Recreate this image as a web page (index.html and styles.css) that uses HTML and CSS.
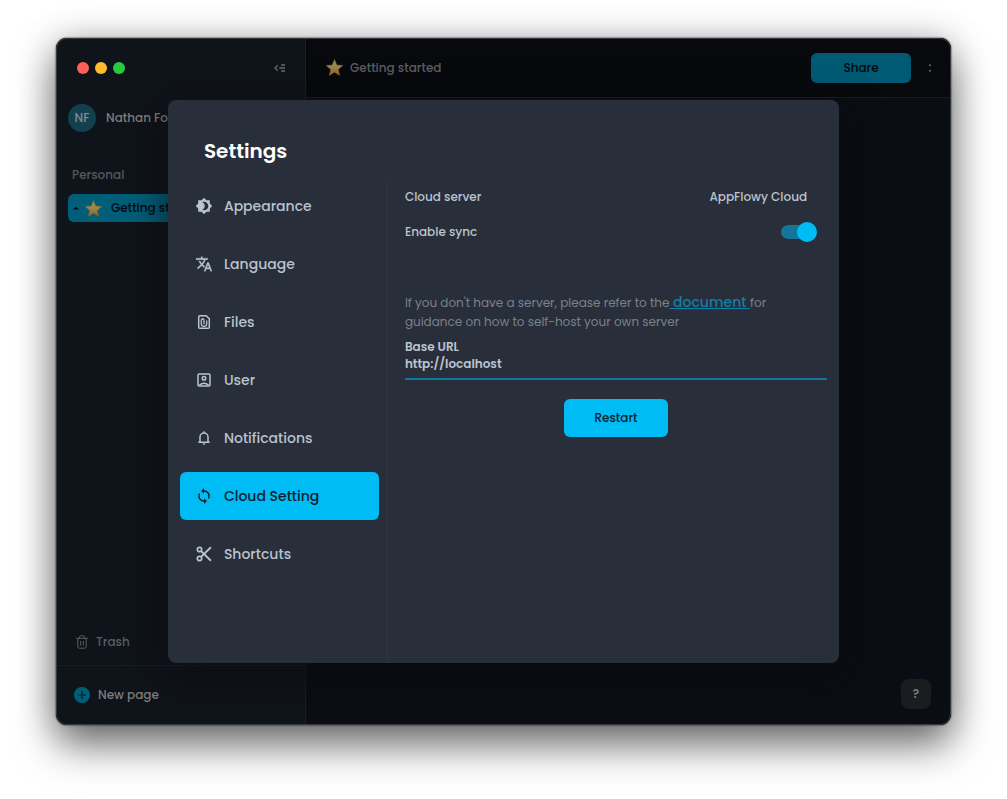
FILE: index.html
```html
<!DOCTYPE html>
<html lang="en">
<head>
<meta charset="utf-8">
<meta name="viewport" content="width=device-width, initial-scale=1">
<title>AppFlowy</title>
<link rel="stylesheet" href="styles.css">
</head>
<body>
<svg class="defs" width="0" height="0" aria-hidden="true">
  <defs>
    <linearGradient id="gold" x1="0" y1="0" x2="0" y2="1">
      <stop offset="0" stop-color="#96916e"/>
      <stop offset=".5" stop-color="#9b8550"/>
      <stop offset="1" stop-color="#946012"/>
    </linearGradient>
    <symbol id="star" viewBox="0 0 24 24">
      <path fill="url(#gold)" stroke="#8a6119" stroke-width=".7" stroke-linejoin="round" d="M12 1.8l2.9 7.1 7.7.5-5.9 5 1.9 7.6L12 17.9 5.4 22l1.9-7.6-5.9-5 7.7-.5z"/>
    </symbol>
  </defs>
</svg>
<div class="window">
  <aside class="sidebar">
    <div class="titlebar">
      <div class="lights"><span class="light red"></span><span class="light yellow"></span><span class="light green"></span></div>
      <button class="icon-button" aria-label="Collapse sidebar">
        <svg width="12" height="10" viewBox="0 0 12 10" fill="none" stroke="currentColor" stroke-width="1.3"><path d="M3.8 2.1L1 5l2.800 2.900M7.200 2H11M5.200 5H11M7.200 8H11"/></svg>
      </button>
    </div>
    <div class="account"><span class="avatar">NF</span><span>Nathan Foo</span></div>
    <h2 class="section">Personal</h2>
    <a class="page-link" href="#">
      <svg class="caret" width="6" height="4" viewBox="0 0 6 4"><path d="M0 3.5L3 .7l3 2.8z" fill="currentColor"/></svg>
      <svg width="19" height="19"><use href="#star"/></svg>
      <span>Getting started</span>
    </a>
    <button class="trash">
      <svg width="12" height="14" viewBox="0 0 12 14" fill="none" stroke="currentColor" stroke-width="1" stroke-linecap="round" stroke-linejoin="round"><path d="M.7 3.3h10.6M3.6 3V1.8Q3.6.8 4.6.8h2.8q1 0 1 1V3M1.8 3.5v8.1q0 1.6 1.6 1.6h5.2q1.6 0 1.6-1.6V3.5M4.7 6.4v3.8M7.3 6.4v3.8"/></svg>
      <span>Trash</span>
    </button>
    <button class="new-page">
      <svg width="16" height="16" viewBox="0 0 16 16"><circle cx="8" cy="8" r="8" fill="#005f78"/><path d="M8 4.2v7.6M4.2 8h7.6" stroke="#0a1c27" stroke-width="1.2" stroke-linecap="round"/></svg>
      <span>New page</span>
    </button>
  </aside>
  <main class="content">
    <header class="topbar">
      <svg width="19" height="19"><use href="#star"/></svg>
      <h1 class="page-title">Getting started</h1>
      <button class="share">Share</button>
      <button class="icon-button more" aria-label="More">
        <svg width="4" height="8" viewBox="0 0 4 8" fill="currentColor"><circle cx="2" cy="1.2" r="1"/><circle cx="2" cy="6.8" r="1"/></svg>
      </button>
    </header>
    <div class="canvas"><button class="help" aria-label="Help">?</button></div>
  </main>

  <div class="overlay">
    <section class="dialog" role="dialog" aria-labelledby="settings-title">
      <h2 class="dialog-title" id="settings-title">Settings</h2>
      <div class="dialog-body">
        <nav class="menu">
          <button class="menu-item">
            <svg width="16" height="16" viewBox="1 1 22 22" fill="currentColor"><path fill-rule="evenodd" d="M20 8.69V4h-4.690L12 .69 8.690 4H4v4.690L.69 12 4 15.310V20h4.690L12 23.310 15.310 20H20v-4.690L23.310 12zM12 18c-.9 0-1.700-.2-2.500-.55C11.560 16.500 13 14.400 13 12S11.560 7.500 9.500 6.550C10.300 6.200 11.100 6 12 6c3.310 0 6 2.690 6 6s-2.690 6-6 6z"/></svg>
            <span>Appearance</span>
          </button>
          <button class="menu-item">
            <svg width="16" height="16" viewBox="1 1 22 22" fill="currentColor" stroke="currentColor" stroke-width=".4"><path d="M12.870 15.070l-2.540-2.510.03-.03A17.520 17.520 0 0 0 14.070 6H17V4h-7V2H8v2H1v2h11.170C11.500 7.920 10.440 9.750 9 11.350 8.070 10.320 7.300 9.190 6.690 8h-2c.73 1.630 1.730 3.170 2.980 4.560l-5.090 5.020L4 19l5-5 3.110 3.110zM18.500 10h-2L12 22h2l1.120-3h4.750L21 22h2zm-2.620 7l1.620-4.330L19.120 17z"/></svg>
            <span>Language</span>
          </button>
          <button class="menu-item">
            <svg width="16" height="16" viewBox="0 0 16 16" fill="none" stroke="currentColor" stroke-width="1.5" stroke-linejoin="round"><path d="M10.200 1.700H3.700q-1 0-1 1v10.600q0 1 1 1h8.600q1 0 1-1V4.800z"/><path stroke-width="1.300" d="M10.700 6.400v3.600a2.700 2.300 0 0 1-5.400 0V6.300q0-1.300 1.350-1.300T8 6.300v3.900"/></svg>
            <span>Files</span>
          </button>
          <button class="menu-item">
            <svg width="16" height="16" viewBox="0 0 16 16" fill="none" stroke="currentColor" stroke-width="1.500"><rect x="2" y="2" width="12" height="12" rx="1"/><circle cx="8" cy="6.300" r="1.800"/><path d="M3.300 13.200q4.700-4 9.400 0"/></svg>
            <span>User</span>
          </button>
          <button class="menu-item">
            <svg width="16" height="16" viewBox="0 0 16 16" fill="none" stroke="currentColor" stroke-width="1.500" stroke-linejoin="round"><path d="M2.300 12.200h11.400M4 12V7.100a4 4 0 0 1 8 0V12M8 3V1.300"/><path d="M6.500 13.600h3q-.3 1.300-1.500 1.300t-1.500-1.300z" fill="currentColor" stroke="none"/></svg>
            <span>Notifications</span>
          </button>
          <button class="menu-item active" aria-current="page">
            <svg width="16" height="16" viewBox="1 1 22 22" fill="currentColor"><path d="M12 4V1L8 5l4 4V6c3.310 0 6 2.690 6 6 0 1.010-.25 1.970-.7 2.800l1.460 1.460A7.930 7.930 0 0 0 20 12c0-4.420-3.580-8-8-8zm0 14c-3.310 0-6-2.690-6-6 0-1.010.25-1.970.7-2.800L5.240 7.740A7.930 7.930 0 0 0 4 12c0 4.420 3.580 8 8 8v3l4-4-4-4z"/></svg>
            <span>Cloud Setting</span>
          </button>
          <button class="menu-item">
            <svg width="16" height="16" viewBox="1 1 22 22" fill="none" stroke="currentColor" stroke-width="2.300"><circle cx="5.800" cy="5.800" r="3"/><circle cx="5.800" cy="18.200" r="3"/><path stroke-width="2.700" d="M8 8l13.500 13.200M8 16L21.500 2.800"/></svg>
            <span>Shortcuts</span>
          </button>
        </nav>
        <form class="panel">
          <div class="row"><span>Cloud server</span><button type="button" class="server">AppFlowy Cloud</button></div>
          <div class="row"><label for="sync">Enable sync</label><input class="switch" id="sync" type="checkbox" role="switch" checked></div>
          <p class="hint">If you don't have a server, please refer to the<a class="doc" href="#"> document </a>for guidance on how to self-host your own server</p>
          <label class="url-label" for="url">Base URL</label>
          <input class="url" id="url" type="text" value="http://localhost">
          <button type="button" class="restart">Restart</button>
        </form>
      </div>
    </section>
  </div>
</div>
</body>
</html>
```
FILE: styles.css
```css
* { box-sizing: border-box; }
body {
  margin: 0;
  min-height: 100vh;
  padding: 38px 56px 74px;
  display: flex;
  background: #fff;
  color: #bbc3cd;
  font: 500 12px/20px Poppins, Inter, sans-serif;
  overflow: hidden;
}
button, input { font: inherit; color: inherit; }
button {
  padding: 0;
  border: 0;
  background: none;
  display: flex;
  align-items: center;
}
h1, h2, p { margin: 0; font: inherit; }
svg { flex: none; }
.defs { position: absolute; }

.window {
  position: relative;
  flex: 1;
  display: grid;
  grid-template-columns: 250px 1fr;
  border-radius: 11px;
  background: #0a0d14;
  box-shadow: 0 0 2px #000, 0 20px 40px rgba(0, 0, 0, .55), 0 0 36px rgba(0, 0, 0, .2);
}
.window::after {
  content: "";
  position: absolute;
  inset: 0;
  border: 1px solid #38393c;
  border-radius: 11px;
  pointer-events: none;
}

.sidebar {
  display: flex;
  flex-direction: column;
  border-right: 1px solid #1a1d23;
  border-radius: 11px 0 0 11px;
  background: #0f131a;
  color: #7d7d7e;
}
.titlebar {
  height: 60px;
  padding: 0 19px 0 21px;
  display: flex;
  align-items: center;
  justify-content: space-between;
}
.lights { display: flex; gap: 6px; }
.light { width: 12px; height: 12px; border-radius: 50%; }
.red { background: #ff5f57; }
.yellow { background: #febc2e; }
.green { background: #28c840; }
.icon-button { color: #6b6d70; }
.account {
  height: 28px;
  margin: 6px 12px 0;
  display: flex;
  align-items: center;
  gap: 10px;
}
.avatar {
  width: 28px;
  height: 28px;
  border-radius: 50%;
  background: #12404f;
  color: #7f8c92;
  line-height: 28px;
  text-align: center;
}
.section { margin: 33px 16px 9px; color: #55585c; }
.page-link {
  height: 28px;
  margin: 0 12px;
  padding-left: 5px;
  display: flex;
  align-items: center;
  border-radius: 6px;
  background: #005e78;
  color: #05090d;
  text-decoration: none;
}
.caret { margin-right: 5px; }
.page-link span { margin-left: 8px; }
.trash { margin: auto 20px 13px; gap: 8px; color: #5b5e62; }
.new-page {
  height: 60px;
  padding: 0 18px 2px;
  gap: 8px;
  border-top: 1px solid #1a1e24;
}

.content { display: flex; flex-direction: column; }
.topbar {
  height: 60px;
  padding: 0 19px;
  display: flex;
  align-items: center;
  border-bottom: 1px solid #1a1d22;
  border-top-right-radius: 11px;
  background: #07090d;
  color: #5c5e61;
}
.page-title { margin-left: 6px; }
.share {
  width: 100px;
  height: 30px;
  margin-left: auto;
  justify-content: center;
  border-radius: 6px;
  background: #005a73;
  color: #04080c;
}
.more { margin-left: 17px; }
.canvas {
  flex: 1;
  padding: 0 20px 16px;
  display: flex;
  align-items: flex-end;
  justify-content: flex-end;
}
.help {
  width: 30px;
  height: 30px;
  justify-content: center;
  border-radius: 8px;
  background: #1a1c1f;
  color: #77797b;
  font-weight: 600;
}

.overlay {
  position: absolute;
  inset: 0;
  padding: 62px 12.5%;
  display: flex;
}
.dialog {
  flex: 1;
  padding-top: 36px;
  display: flex;
  flex-direction: column;
  border-radius: 8px;
  background: #282e3a;
  box-shadow: 0 10px 40px rgba(10, 10, 10, .7);
}
.dialog-title {
  padding: 0 36px;
  margin-bottom: 16px;
  color: #fff;
  font-size: 20px;
  font-weight: 600;
  line-height: 30px;
}
.dialog-body {
  flex: 1;
  display: grid;
  grid-template-columns: 220px 1fr;
}
.menu {
  padding: 0 8px 0 12px;
  display: flex;
  flex-direction: column;
  gap: 10px;
  border-right: 1px solid #303642;
}
.menu-item {
  height: 48px;
  padding: 0 16px;
  gap: 12px;
  border-radius: 6px;
  font-size: 14px;
}
.active { background: #00bcf4; color: #10202b; }
.panel {
  padding: 0 12px 0 17px;
  display: flex;
  flex-direction: column;
}
.row {
  height: 30px;
  display: flex;
  align-items: center;
  justify-content: space-between;
}
.row + .row { height: 40px; }
.server { padding-right: 20px; }
.switch {
  appearance: none;
  width: 36px;
  height: 20px;
  margin: 0 10px 0 0;
  display: flex;
  align-items: center;
}
.switch::before {
  content: "";
  width: 30px;
  height: 14px;
  border-radius: 7px;
  background: #14759a;
}
.switch::after {
  content: "";
  width: 20px;
  height: 20px;
  margin-left: -14px;
  border-radius: 50%;
  background: #00bcf4;
}
.hint {
  margin: 41px 0 7px;
  padding-right: 20px;
  color: #7c818b;
  font-weight: 400;
  line-height: 19px;
}
.doc { color: #127fa5; font-size: 14px; font-weight: 500; }
.url-label { font-weight: 600; line-height: 17px; }
.url {
  width: 100%;
  height: 25px;
  padding: 0 0 6px;
  border: 0;
  border-bottom: 2px solid #12799e;
  outline: 0;
  background: none;
  font-weight: 600;
}
.restart {
  width: 104px;
  height: 38px;
  margin: 19px auto 0;
  justify-content: center;
  border-radius: 6px;
  background: #00bcf4;
  color: #10202b;
}
```
